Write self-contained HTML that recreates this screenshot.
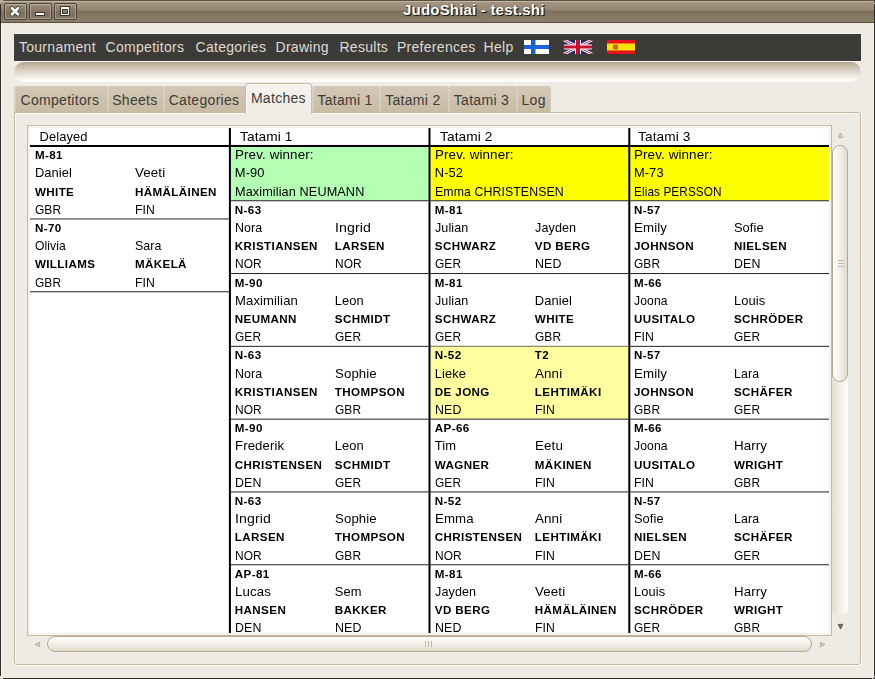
<!DOCTYPE html>
<html><head><meta charset="utf-8"><style>
html,body{margin:0;padding:0;}
body{width:875px;height:679px;position:relative;overflow:hidden;background:#3c3b37;font-family:"Liberation Sans",sans-serif;}
#win{position:absolute;left:0;top:0;width:875px;height:679px;background:#eeeae4;border-radius:5px 5px 4px 4px;overflow:hidden;}
div{position:absolute;box-sizing:border-box;}
.t{white-space:pre;line-height:normal;transform-origin:0 0;}
#title{left:0;top:0;width:875px;height:23px;
 background:linear-gradient(#57503f 0,#57503f 1px,#c4b8a5 1px,#c4b8a5 2px,#a39581 2px,#958772 10px,#7d705e 11px,#8d806a 22px,#57503f 22px);}
.wbtn{top:3px;width:23px;height:17px;border:1px solid #4a4235;border-radius:2px;
 background:linear-gradient(#9c8f7b,#7d705e 60%,#857866);box-shadow:inset 0 0 0 1px rgba(255,255,255,0.3);}
#toolbar{left:14px;top:62px;width:847px;height:20px;border-radius:10px;
 background:linear-gradient(#b3a48c 0%,#d9d0c3 40%,#f5f2ec 80%,#ffffff 100%);}
#nbframe{left:14px;top:112px;width:847px;height:553px;border:1px solid #c8b9a0;border-radius:0 3px 3px 3px;
 box-shadow:inset 1px 1px 0 #fbfaf7, 1px 1px 0 #fbf9f5;}
.tab{top:86px;height:27px;border:1px solid #d6ccbc;border-bottom:1px solid #c8b9a0;border-radius:3px 3px 0 0;
 background:linear-gradient(#d3c8b5,#c9bca5);box-shadow:inset 1px 0 0 rgba(255,255,255,0.25);}
#acttab{left:245px;top:83px;width:67px;height:31px;border:1px solid #c9bca6;border-bottom:none;border-radius:4px 4px 0 0;
 background:linear-gradient(#f6f3ee,#efebe5);box-shadow:inset 1px 1px 0 #fdfcfa;}
#swframe{left:27px;top:125px;width:805px;height:511px;border:1px solid #c8b9a0;background:#f6f3ee;}
#content{left:30px;top:128px;width:799px;height:505px;background:#fff;overflow:hidden;will-change:transform;}
#vslider{left:832px;top:145px;width:16px;height:237px;border:1px solid #b8a78c;border-radius:8px;
 background:linear-gradient(90deg,#ffffff,#f0ebe3 60%,#e3dace);}
#vtrough{left:832px;top:370px;width:16px;height:246px;border-radius:0 0 8px 8px;
 background:linear-gradient(90deg,#e6ded1,#f5f1ea 60%,#ffffff);}
#hslider{left:47px;top:636px;width:765px;height:16px;border:1px solid #b8a78c;border-radius:8px;
 background:linear-gradient(#ffffff,#f0ebe3 60%,#e3dace);}
.grip{width:6px;height:1px;background:#c5b8a2;}
.vgrip{width:1px;height:6px;background:#c5b8a2;}
</style></head>
<body><div style="left:0;top:0;width:8px;height:8px;background:#b9aa93"></div><div style="left:867px;top:671px;width:8px;height:8px;background:#3a2236"></div><div style="left:0;top:671px;width:8px;height:8px;background:#d8cfc4"></div><div id="win">
<div id="title"></div>
<div class="wbtn" style="left:4px"></div>
<div class="wbtn" style="left:29px"></div>
<div class="wbtn" style="left:54px"></div>
<svg style="position:absolute;left:0;top:0" width="90" height="24">
<g stroke="#3b342a" stroke-width="4.4" stroke-linecap="round" opacity="0.95">
<path d="M12 8.3 L18 14.2 M18 8.3 L12 14.2"/></g>
<g stroke="#fff" stroke-width="2.7" stroke-linecap="round">
<path d="M12 8.3 L18 14.2 M18 8.3 L12 14.2"/></g>
<rect x="35" y="12" width="10" height="4" rx="1" fill="#3b342a"/>
<rect x="36" y="13" width="8" height="2" fill="#fff"/>
<rect x="60" y="6" width="10" height="10" rx="0.8" fill="#3b342a"/>
<rect x="61" y="7" width="8" height="8" fill="#fff"/>
<rect x="62" y="9" width="6" height="5" fill="#3b342a"/>
<rect x="63" y="10" width="4" height="3" fill="#887b68"/>
</svg>
<div class="t" style="left:403.00px;top:1.00px;font-size:15px;font-weight:700;color:#fff;letter-spacing:0.2px;text-shadow:1px 1px 1px #1e1a12, 1px 1px 0 #3a3226, 0 0 1px #3a3226">JudoShiai - test.shi</div>
<div style="left:14px;top:33px;width:847px;height:1px;background:#f8f6f2"></div>
<div style="left:14px;top:34px;width:847px;height:27px;background:#3c3b37"></div>
<div style="left:14px;top:61px;width:847px;height:1px;background:#faf8f4"></div>
<div class="t" style="left:18.90px;top:39.00px;font-size:14px;font-weight:400;color:#dfdbd2;letter-spacing:0.3px;">Tournament</div>
<div class="t" style="left:105.50px;top:39.00px;font-size:14px;font-weight:400;color:#dfdbd2;letter-spacing:0.3px;">Competitors</div>
<div class="t" style="left:195.50px;top:39.00px;font-size:14px;font-weight:400;color:#dfdbd2;letter-spacing:0.3px;">Categories</div>
<div class="t" style="left:275.50px;top:39.00px;font-size:14px;font-weight:400;color:#dfdbd2;letter-spacing:0.3px;">Drawing</div>
<div class="t" style="left:339.40px;top:39.00px;font-size:14px;font-weight:400;color:#dfdbd2;letter-spacing:0.3px;">Results</div>
<div class="t" style="left:396.90px;top:39.00px;font-size:14px;font-weight:400;color:#dfdbd2;letter-spacing:0.3px;">Preferences</div>
<div class="t" style="left:483.50px;top:39.00px;font-size:14px;font-weight:400;color:#dfdbd2;letter-spacing:0.3px;">Help</div>
<svg style="position:absolute;left:524px;top:40px" width="112" height="14">
<rect x="0" y="0" width="25" height="14" fill="#fff"/>
<rect x="7" y="0" width="4.5" height="14" fill="#1a62d6"/>
<rect x="0" y="5" width="25" height="4" fill="#1a62d6"/>
<g transform="translate(40,0)">
<rect x="0" y="0" width="28" height="14" fill="#1c2a6a"/>
<path d="M0 0 L28 14 M28 0 L0 14" stroke="#fff" stroke-width="3"/>
<path d="M0 0 L28 14 M28 0 L0 14" stroke="#c8102e" stroke-width="1"/>
<rect x="11" y="0" width="6" height="14" fill="#fff"/>
<rect x="0" y="4.5" width="28" height="5" fill="#fff"/>
<rect x="12" y="0" width="4" height="14" fill="#c8102e"/>
<rect x="0" y="5.5" width="28" height="3" fill="#c8102e"/>
</g>
<g transform="translate(83,0)">
<rect x="0" y="0" width="28" height="14" fill="#e8101a"/>
<rect x="0" y="3.5" width="28" height="7" fill="#fbe000"/>
<rect x="6" y="4.5" width="5" height="5" fill="#c46a30" rx="1"/>
</g>
</svg>
<div id="toolbar"></div>
<div id="nbframe"></div>
<div class="tab" style="left:14px;width:94px"></div>
<div class="tab" style="left:107px;width:57px"></div>
<div class="tab" style="left:163px;width:83px"></div>
<div class="tab" style="left:312px;width:68px"></div>
<div class="tab" style="left:379px;width:70px"></div>
<div class="tab" style="left:447.5px;width:69.5px"></div>
<div class="tab" style="left:516px;width:35px"></div>
<div class="t" style="left:20.50px;top:92.00px;font-size:14px;font-weight:400;color:#3c3b37;letter-spacing:0.3px;">Competitors</div>
<div class="t" style="left:112.20px;top:92.00px;font-size:14px;font-weight:400;color:#3c3b37;letter-spacing:0.3px;">Sheets</div>
<div class="t" style="left:168.70px;top:92.00px;font-size:14px;font-weight:400;color:#3c3b37;letter-spacing:0.3px;">Categories</div>
<div class="t" style="left:317.40px;top:92.00px;font-size:14px;font-weight:400;color:#3c3b37;letter-spacing:0.3px;">Tatami 1</div>
<div class="t" style="left:385.20px;top:92.00px;font-size:14px;font-weight:400;color:#3c3b37;letter-spacing:0.3px;">Tatami 2</div>
<div class="t" style="left:453.80px;top:92.00px;font-size:14px;font-weight:400;color:#3c3b37;letter-spacing:0.3px;">Tatami 3</div>
<div class="t" style="left:521.50px;top:92.00px;font-size:14px;font-weight:400;color:#3c3b37;letter-spacing:0.3px;">Log</div>
<div id="acttab"></div>
<div class="t" style="left:250.90px;top:90.00px;font-size:14px;font-weight:400;color:#3c3b37;letter-spacing:0.3px;">Matches</div>
<div id="swframe"></div>
<div id="content">
<svg style="position:absolute;left:0;top:0" width="800" height="510" shape-rendering="geometricPrecision"><rect x="0" y="90.45" width="198.9" height="1" fill="#222"/><rect x="0" y="163.25" width="198.9" height="1" fill="#222"/><rect x="200.9" y="19.0" width="197.6" height="53.60" fill="#b3ffb3"/><rect x="200.9" y="72.25" width="197.6" height="1" fill="#222"/><rect x="200.9" y="145.05" width="197.6" height="1" fill="#222"/><rect x="200.9" y="217.85" width="197.6" height="1" fill="#222"/><rect x="200.9" y="290.65" width="197.6" height="1" fill="#222"/><rect x="200.9" y="363.45" width="197.6" height="1" fill="#222"/><rect x="200.9" y="436.25" width="197.6" height="1" fill="#222"/><rect x="200.9" y="509.05" width="197.6" height="1" fill="#222"/><rect x="400.5" y="19.0" width="197.79999999999995" height="53.60" fill="#ffff00"/><rect x="400.5" y="72.25" width="197.79999999999995" height="1" fill="#222"/><rect x="400.5" y="145.05" width="197.79999999999995" height="1" fill="#222"/><rect x="400.5" y="217.85" width="197.79999999999995" height="1" fill="#222"/><rect x="400.5" y="218.60" width="197.79999999999995" height="72.00" fill="#ffffa0"/><rect x="400.5" y="290.65" width="197.79999999999995" height="1" fill="#222"/><rect x="400.5" y="363.45" width="197.79999999999995" height="1" fill="#222"/><rect x="400.5" y="436.25" width="197.79999999999995" height="1" fill="#222"/><rect x="400.5" y="509.05" width="197.79999999999995" height="1" fill="#222"/><rect x="600.3" y="19.0" width="198.70000000000005" height="53.60" fill="#ffff00"/><rect x="600.3" y="72.25" width="198.70000000000005" height="1" fill="#222"/><rect x="600.3" y="145.05" width="198.70000000000005" height="1" fill="#222"/><rect x="600.3" y="217.85" width="198.70000000000005" height="1" fill="#222"/><rect x="600.3" y="290.65" width="198.70000000000005" height="1" fill="#222"/><rect x="600.3" y="363.45" width="198.70000000000005" height="1" fill="#222"/><rect x="600.3" y="436.25" width="198.70000000000005" height="1" fill="#222"/><rect x="600.3" y="509.05" width="198.70000000000005" height="1" fill="#222"/><rect x="0" y="17" width="800" height="2" fill="#000"/><rect x="198.90" y="0" width="2" height="520" fill="#000"/><rect x="398.50" y="0" width="2" height="520" fill="#000"/><rect x="598.30" y="0" width="2" height="520" fill="#000"/></svg>
<div class="t" style="left:9.50px;top:1.00px;font-size:12.9px;font-weight:400;letter-spacing:0.1px;">Delayed</div>
<div class="t" style="left:4.90px;top:20.00px;font-size:11.6px;font-weight:700;letter-spacing:0.4px;">M-81</div>
<div class="t" style="left:4.90px;top:37.00px;font-size:12.9px;font-weight:400;letter-spacing:0.1px;">Daniel</div>
<div class="t" style="left:104.90px;top:37.00px;font-size:12.9px;font-weight:400;letter-spacing:0.1px;transform:scaleX(1.0357);">Veeti</div>
<div class="t" style="left:4.90px;top:57.00px;font-size:11.6px;font-weight:700;letter-spacing:0.4px;">WHITE</div>
<div class="t" style="left:104.90px;top:57.00px;font-size:11.6px;font-weight:700;letter-spacing:0.4px;">HÄMÄLÄINEN</div>
<div class="t" style="left:4.90px;top:74.00px;font-size:12.9px;font-weight:400;letter-spacing:0.1px;transform:scaleX(0.9231);">GBR</div>
<div class="t" style="left:104.90px;top:74.00px;font-size:12.9px;font-weight:400;letter-spacing:0.1px;transform:scaleX(0.9474);">FIN</div>
<div class="t" style="left:4.90px;top:93.00px;font-size:11.6px;font-weight:700;letter-spacing:0.4px;">N-70</div>
<div class="t" style="left:4.90px;top:110.00px;font-size:12.9px;font-weight:400;letter-spacing:0.1px;transform:scaleX(0.9375);">Olivia</div>
<div class="t" style="left:104.90px;top:110.00px;font-size:12.9px;font-weight:400;letter-spacing:0.1px;transform:scaleX(0.9615);">Sara</div>
<div class="t" style="left:4.90px;top:129.00px;font-size:11.6px;font-weight:700;letter-spacing:0.4px;">WILLIAMS</div>
<div class="t" style="left:104.90px;top:129.00px;font-size:11.6px;font-weight:700;letter-spacing:0.4px;">MÄKELÄ</div>
<div class="t" style="left:4.90px;top:147.00px;font-size:12.9px;font-weight:400;letter-spacing:0.1px;transform:scaleX(0.9231);">GBR</div>
<div class="t" style="left:104.90px;top:147.00px;font-size:12.9px;font-weight:400;letter-spacing:0.1px;transform:scaleX(0.9474);">FIN</div>
<div class="t" style="left:209.80px;top:1.00px;font-size:12.9px;font-weight:400;letter-spacing:0.1px;transform:scaleX(1.0612);">Tatami 1</div>
<div class="t" style="left:204.80px;top:19.00px;font-size:12.9px;font-weight:400;letter-spacing:0.1px;transform:scaleX(1.0405);">Prev. winner:</div>
<div class="t" style="left:204.80px;top:37.00px;font-size:12.9px;font-weight:400;letter-spacing:0.1px;">M-90</div>
<div class="t" style="left:204.80px;top:56.00px;font-size:12.9px;font-weight:400;letter-spacing:0.1px;transform:scaleX(0.9845);">Maximilian NEUMANN</div>
<div class="t" style="left:204.80px;top:75.00px;font-size:11.6px;font-weight:700;letter-spacing:0.4px;">N-63</div>
<div class="t" style="left:204.80px;top:92.00px;font-size:12.9px;font-weight:400;letter-spacing:0.1px;transform:scaleX(0.963);">Nora</div>
<div class="t" style="left:304.80px;top:92.00px;font-size:12.9px;font-weight:400;letter-spacing:0.1px;transform:scaleX(1.0968);">Ingrid</div>
<div class="t" style="left:204.80px;top:111.00px;font-size:11.6px;font-weight:700;letter-spacing:0.4px;">KRISTIANSEN</div>
<div class="t" style="left:304.80px;top:111.00px;font-size:11.6px;font-weight:700;letter-spacing:0.4px;">LARSEN</div>
<div class="t" style="left:204.80px;top:128.00px;font-size:12.9px;font-weight:400;letter-spacing:0.1px;transform:scaleX(0.9259);">NOR</div>
<div class="t" style="left:304.80px;top:128.00px;font-size:12.9px;font-weight:400;letter-spacing:0.1px;transform:scaleX(0.9259);">NOR</div>
<div class="t" style="left:204.80px;top:148.00px;font-size:11.6px;font-weight:700;letter-spacing:0.4px;">M-90</div>
<div class="t" style="left:204.80px;top:165.00px;font-size:12.9px;font-weight:400;letter-spacing:0.1px;transform:scaleX(1.0167);">Maximilian</div>
<div class="t" style="left:304.80px;top:165.00px;font-size:12.9px;font-weight:400;letter-spacing:0.1px;">Leon</div>
<div class="t" style="left:204.80px;top:184.00px;font-size:11.6px;font-weight:700;letter-spacing:0.4px;">NEUMANN</div>
<div class="t" style="left:304.80px;top:184.00px;font-size:11.6px;font-weight:700;letter-spacing:0.4px;">SCHMIDT</div>
<div class="t" style="left:204.80px;top:201.00px;font-size:12.9px;font-weight:400;letter-spacing:0.1px;transform:scaleX(0.9231);">GER</div>
<div class="t" style="left:304.80px;top:201.00px;font-size:12.9px;font-weight:400;letter-spacing:0.1px;transform:scaleX(0.9231);">GER</div>
<div class="t" style="left:204.80px;top:220.00px;font-size:11.6px;font-weight:700;letter-spacing:0.4px;">N-63</div>
<div class="t" style="left:204.80px;top:238.00px;font-size:12.9px;font-weight:400;letter-spacing:0.1px;transform:scaleX(0.963);">Nora</div>
<div class="t" style="left:304.80px;top:238.00px;font-size:12.9px;font-weight:400;letter-spacing:0.1px;transform:scaleX(1.0256);">Sophie</div>
<div class="t" style="left:204.80px;top:257.00px;font-size:11.6px;font-weight:700;letter-spacing:0.4px;">KRISTIANSEN</div>
<div class="t" style="left:304.80px;top:257.00px;font-size:11.6px;font-weight:700;letter-spacing:0.4px;">THOMPSON</div>
<div class="t" style="left:204.80px;top:274.00px;font-size:12.9px;font-weight:400;letter-spacing:0.1px;transform:scaleX(0.9259);">NOR</div>
<div class="t" style="left:304.80px;top:274.00px;font-size:12.9px;font-weight:400;letter-spacing:0.1px;transform:scaleX(0.9231);">GBR</div>
<div class="t" style="left:204.80px;top:293.00px;font-size:11.6px;font-weight:700;letter-spacing:0.4px;">M-90</div>
<div class="t" style="left:204.80px;top:310.00px;font-size:12.9px;font-weight:400;letter-spacing:0.1px;transform:scaleX(1.0213);">Frederik</div>
<div class="t" style="left:304.80px;top:310.00px;font-size:12.9px;font-weight:400;letter-spacing:0.1px;">Leon</div>
<div class="t" style="left:204.80px;top:330.00px;font-size:11.6px;font-weight:700;letter-spacing:0.4px;">CHRISTENSEN</div>
<div class="t" style="left:304.80px;top:330.00px;font-size:11.6px;font-weight:700;letter-spacing:0.4px;">SCHMIDT</div>
<div class="t" style="left:204.80px;top:347.00px;font-size:12.9px;font-weight:400;letter-spacing:0.1px;transform:scaleX(0.96);">DEN</div>
<div class="t" style="left:304.80px;top:347.00px;font-size:12.9px;font-weight:400;letter-spacing:0.1px;transform:scaleX(0.9231);">GER</div>
<div class="t" style="left:204.80px;top:366.00px;font-size:11.6px;font-weight:700;letter-spacing:0.4px;">N-63</div>
<div class="t" style="left:204.80px;top:383.00px;font-size:12.9px;font-weight:400;letter-spacing:0.1px;transform:scaleX(1.0968);">Ingrid</div>
<div class="t" style="left:304.80px;top:383.00px;font-size:12.9px;font-weight:400;letter-spacing:0.1px;transform:scaleX(1.0256);">Sophie</div>
<div class="t" style="left:204.80px;top:402.00px;font-size:11.6px;font-weight:700;letter-spacing:0.4px;">LARSEN</div>
<div class="t" style="left:304.80px;top:402.00px;font-size:11.6px;font-weight:700;letter-spacing:0.4px;">THOMPSON</div>
<div class="t" style="left:204.80px;top:420.00px;font-size:12.9px;font-weight:400;letter-spacing:0.1px;transform:scaleX(0.9259);">NOR</div>
<div class="t" style="left:304.80px;top:420.00px;font-size:12.9px;font-weight:400;letter-spacing:0.1px;transform:scaleX(0.9231);">GBR</div>
<div class="t" style="left:204.80px;top:439.00px;font-size:11.6px;font-weight:700;letter-spacing:0.4px;">AP-81</div>
<div class="t" style="left:204.80px;top:456.00px;font-size:12.9px;font-weight:400;letter-spacing:0.1px;transform:scaleX(1.0303);">Lucas</div>
<div class="t" style="left:304.80px;top:456.00px;font-size:12.9px;font-weight:400;letter-spacing:0.1px;">Sem</div>
<div class="t" style="left:204.80px;top:475.00px;font-size:11.6px;font-weight:700;letter-spacing:0.4px;">HANSEN</div>
<div class="t" style="left:304.80px;top:475.00px;font-size:11.6px;font-weight:700;letter-spacing:0.4px;">BAKKER</div>
<div class="t" style="left:204.80px;top:492.00px;font-size:12.9px;font-weight:400;letter-spacing:0.1px;transform:scaleX(0.96);">DEN</div>
<div class="t" style="left:304.80px;top:492.00px;font-size:12.9px;font-weight:400;letter-spacing:0.1px;transform:scaleX(0.9615);">NED</div>
<div class="t" style="left:409.70px;top:1.00px;font-size:12.9px;font-weight:400;letter-spacing:0.1px;transform:scaleX(1.0612);">Tatami 2</div>
<div class="t" style="left:404.80px;top:19.00px;font-size:12.9px;font-weight:400;letter-spacing:0.1px;transform:scaleX(1.0405);">Prev. winner:</div>
<div class="t" style="left:404.80px;top:37.00px;font-size:12.9px;font-weight:400;letter-spacing:0.1px;">N-52</div>
<div class="t" style="left:404.80px;top:56.00px;font-size:12.9px;font-weight:400;letter-spacing:0.1px;transform:scaleX(0.9549);">Emma CHRISTENSEN</div>
<div class="t" style="left:404.80px;top:75.00px;font-size:11.6px;font-weight:700;letter-spacing:0.4px;">M-81</div>
<div class="t" style="left:404.80px;top:92.00px;font-size:12.9px;font-weight:400;letter-spacing:0.1px;transform:scaleX(0.9706);">Julian</div>
<div class="t" style="left:504.80px;top:92.00px;font-size:12.9px;font-weight:400;letter-spacing:0.1px;transform:scaleX(0.9762);">Jayden</div>
<div class="t" style="left:404.80px;top:111.00px;font-size:11.6px;font-weight:700;letter-spacing:0.4px;">SCHWARZ</div>
<div class="t" style="left:504.80px;top:111.00px;font-size:11.6px;font-weight:700;letter-spacing:0.4px;">VD BERG</div>
<div class="t" style="left:404.80px;top:128.00px;font-size:12.9px;font-weight:400;letter-spacing:0.1px;transform:scaleX(0.9231);">GER</div>
<div class="t" style="left:504.80px;top:128.00px;font-size:12.9px;font-weight:400;letter-spacing:0.1px;transform:scaleX(0.9615);">NED</div>
<div class="t" style="left:404.80px;top:148.00px;font-size:11.6px;font-weight:700;letter-spacing:0.4px;">M-81</div>
<div class="t" style="left:404.80px;top:165.00px;font-size:12.9px;font-weight:400;letter-spacing:0.1px;transform:scaleX(0.9706);">Julian</div>
<div class="t" style="left:504.80px;top:165.00px;font-size:12.9px;font-weight:400;letter-spacing:0.1px;">Daniel</div>
<div class="t" style="left:404.80px;top:184.00px;font-size:11.6px;font-weight:700;letter-spacing:0.4px;">SCHWARZ</div>
<div class="t" style="left:504.80px;top:184.00px;font-size:11.6px;font-weight:700;letter-spacing:0.4px;">WHITE</div>
<div class="t" style="left:404.80px;top:201.00px;font-size:12.9px;font-weight:400;letter-spacing:0.1px;transform:scaleX(0.9231);">GER</div>
<div class="t" style="left:504.80px;top:201.00px;font-size:12.9px;font-weight:400;letter-spacing:0.1px;transform:scaleX(0.9231);">GBR</div>
<div class="t" style="left:404.80px;top:220.00px;font-size:11.6px;font-weight:700;letter-spacing:0.4px;">N-52</div>
<div class="t" style="left:504.80px;top:220.00px;font-size:11.6px;font-weight:700;letter-spacing:0.4px;">T2</div>
<div class="t" style="left:404.80px;top:238.00px;font-size:12.9px;font-weight:400;letter-spacing:0.1px;">Lieke</div>
<div class="t" style="left:504.80px;top:238.00px;font-size:12.9px;font-weight:400;letter-spacing:0.1px;transform:scaleX(1.04);">Anni</div>
<div class="t" style="left:404.80px;top:257.00px;font-size:11.6px;font-weight:700;letter-spacing:0.4px;">DE JONG</div>
<div class="t" style="left:504.80px;top:257.00px;font-size:11.6px;font-weight:700;letter-spacing:0.4px;">LEHTIMÄKI</div>
<div class="t" style="left:404.80px;top:274.00px;font-size:12.9px;font-weight:400;letter-spacing:0.1px;transform:scaleX(0.9615);">NED</div>
<div class="t" style="left:504.80px;top:274.00px;font-size:12.9px;font-weight:400;letter-spacing:0.1px;transform:scaleX(0.9474);">FIN</div>
<div class="t" style="left:404.80px;top:293.00px;font-size:11.6px;font-weight:700;letter-spacing:0.4px;">AP-66</div>
<div class="t" style="left:404.80px;top:310.00px;font-size:12.9px;font-weight:400;letter-spacing:0.1px;">Tim</div>
<div class="t" style="left:504.80px;top:310.00px;font-size:12.9px;font-weight:400;letter-spacing:0.1px;transform:scaleX(1.04);">Eetu</div>
<div class="t" style="left:404.80px;top:330.00px;font-size:11.6px;font-weight:700;letter-spacing:0.4px;">WAGNER</div>
<div class="t" style="left:504.80px;top:330.00px;font-size:11.6px;font-weight:700;letter-spacing:0.4px;">MÄKINEN</div>
<div class="t" style="left:404.80px;top:347.00px;font-size:12.9px;font-weight:400;letter-spacing:0.1px;transform:scaleX(0.9231);">GER</div>
<div class="t" style="left:504.80px;top:347.00px;font-size:12.9px;font-weight:400;letter-spacing:0.1px;transform:scaleX(0.9474);">FIN</div>
<div class="t" style="left:404.80px;top:366.00px;font-size:11.6px;font-weight:700;letter-spacing:0.4px;">N-52</div>
<div class="t" style="left:404.80px;top:383.00px;font-size:12.9px;font-weight:400;letter-spacing:0.1px;transform:scaleX(1.0278);">Emma</div>
<div class="t" style="left:504.80px;top:383.00px;font-size:12.9px;font-weight:400;letter-spacing:0.1px;transform:scaleX(1.04);">Anni</div>
<div class="t" style="left:404.80px;top:402.00px;font-size:11.6px;font-weight:700;letter-spacing:0.4px;">CHRISTENSEN</div>
<div class="t" style="left:504.80px;top:402.00px;font-size:11.6px;font-weight:700;letter-spacing:0.4px;">LEHTIMÄKI</div>
<div class="t" style="left:404.80px;top:420.00px;font-size:12.9px;font-weight:400;letter-spacing:0.1px;transform:scaleX(0.9259);">NOR</div>
<div class="t" style="left:504.80px;top:420.00px;font-size:12.9px;font-weight:400;letter-spacing:0.1px;transform:scaleX(0.9474);">FIN</div>
<div class="t" style="left:404.80px;top:439.00px;font-size:11.6px;font-weight:700;letter-spacing:0.4px;">M-81</div>
<div class="t" style="left:404.80px;top:456.00px;font-size:12.9px;font-weight:400;letter-spacing:0.1px;transform:scaleX(0.9762);">Jayden</div>
<div class="t" style="left:504.80px;top:456.00px;font-size:12.9px;font-weight:400;letter-spacing:0.1px;transform:scaleX(1.0357);">Veeti</div>
<div class="t" style="left:404.80px;top:475.00px;font-size:11.6px;font-weight:700;letter-spacing:0.4px;">VD BERG</div>
<div class="t" style="left:504.80px;top:475.00px;font-size:11.6px;font-weight:700;letter-spacing:0.4px;">HÄMÄLÄINEN</div>
<div class="t" style="left:404.80px;top:492.00px;font-size:12.9px;font-weight:400;letter-spacing:0.1px;transform:scaleX(0.9615);">NED</div>
<div class="t" style="left:504.80px;top:492.00px;font-size:12.9px;font-weight:400;letter-spacing:0.1px;transform:scaleX(0.9474);">FIN</div>
<div class="t" style="left:608.40px;top:1.00px;font-size:12.9px;font-weight:400;letter-spacing:0.1px;transform:scaleX(1.0612);">Tatami 3</div>
<div class="t" style="left:603.90px;top:19.00px;font-size:12.9px;font-weight:400;letter-spacing:0.1px;transform:scaleX(1.0405);">Prev. winner:</div>
<div class="t" style="left:603.90px;top:37.00px;font-size:12.9px;font-weight:400;letter-spacing:0.1px;">M-73</div>
<div class="t" style="left:603.90px;top:56.00px;font-size:12.9px;font-weight:400;letter-spacing:0.1px;transform:scaleX(0.9149);">Elias PERSSON</div>
<div class="t" style="left:603.90px;top:75.00px;font-size:11.6px;font-weight:700;letter-spacing:0.4px;">N-57</div>
<div class="t" style="left:603.90px;top:92.00px;font-size:12.9px;font-weight:400;letter-spacing:0.1px;transform:scaleX(1.0323);">Emily</div>
<div class="t" style="left:703.90px;top:92.00px;font-size:12.9px;font-weight:400;letter-spacing:0.1px;">Sofie</div>
<div class="t" style="left:603.90px;top:111.00px;font-size:11.6px;font-weight:700;letter-spacing:0.4px;">JOHNSON</div>
<div class="t" style="left:703.90px;top:111.00px;font-size:11.6px;font-weight:700;letter-spacing:0.4px;">NIELSEN</div>
<div class="t" style="left:603.90px;top:128.00px;font-size:12.9px;font-weight:400;letter-spacing:0.1px;transform:scaleX(0.9231);">GBR</div>
<div class="t" style="left:703.90px;top:128.00px;font-size:12.9px;font-weight:400;letter-spacing:0.1px;transform:scaleX(0.96);">DEN</div>
<div class="t" style="left:603.90px;top:148.00px;font-size:11.6px;font-weight:700;letter-spacing:0.4px;">M-66</div>
<div class="t" style="left:603.90px;top:165.00px;font-size:12.9px;font-weight:400;letter-spacing:0.1px;transform:scaleX(0.9429);">Joona</div>
<div class="t" style="left:703.90px;top:165.00px;font-size:12.9px;font-weight:400;letter-spacing:0.1px;">Louis</div>
<div class="t" style="left:603.90px;top:184.00px;font-size:11.6px;font-weight:700;letter-spacing:0.4px;">UUSITALO</div>
<div class="t" style="left:703.90px;top:184.00px;font-size:11.6px;font-weight:700;letter-spacing:0.4px;">SCHRÖDER</div>
<div class="t" style="left:603.90px;top:201.00px;font-size:12.9px;font-weight:400;letter-spacing:0.1px;transform:scaleX(0.9474);">FIN</div>
<div class="t" style="left:703.90px;top:201.00px;font-size:12.9px;font-weight:400;letter-spacing:0.1px;transform:scaleX(0.9231);">GER</div>
<div class="t" style="left:603.90px;top:220.00px;font-size:11.6px;font-weight:700;letter-spacing:0.4px;">N-57</div>
<div class="t" style="left:603.90px;top:238.00px;font-size:12.9px;font-weight:400;letter-spacing:0.1px;transform:scaleX(1.0323);">Emily</div>
<div class="t" style="left:703.90px;top:238.00px;font-size:12.9px;font-weight:400;letter-spacing:0.1px;transform:scaleX(0.96);">Lara</div>
<div class="t" style="left:603.90px;top:257.00px;font-size:11.6px;font-weight:700;letter-spacing:0.4px;">JOHNSON</div>
<div class="t" style="left:703.90px;top:257.00px;font-size:11.6px;font-weight:700;letter-spacing:0.4px;">SCHÄFER</div>
<div class="t" style="left:603.90px;top:274.00px;font-size:12.9px;font-weight:400;letter-spacing:0.1px;transform:scaleX(0.9231);">GBR</div>
<div class="t" style="left:703.90px;top:274.00px;font-size:12.9px;font-weight:400;letter-spacing:0.1px;transform:scaleX(0.9231);">GER</div>
<div class="t" style="left:603.90px;top:293.00px;font-size:11.6px;font-weight:700;letter-spacing:0.4px;">M-66</div>
<div class="t" style="left:603.90px;top:310.00px;font-size:12.9px;font-weight:400;letter-spacing:0.1px;transform:scaleX(0.9429);">Joona</div>
<div class="t" style="left:703.90px;top:310.00px;font-size:12.9px;font-weight:400;letter-spacing:0.1px;transform:scaleX(1.0323);">Harry</div>
<div class="t" style="left:603.90px;top:330.00px;font-size:11.6px;font-weight:700;letter-spacing:0.4px;">UUSITALO</div>
<div class="t" style="left:703.90px;top:330.00px;font-size:11.6px;font-weight:700;letter-spacing:0.4px;">WRIGHT</div>
<div class="t" style="left:603.90px;top:347.00px;font-size:12.9px;font-weight:400;letter-spacing:0.1px;transform:scaleX(0.9474);">FIN</div>
<div class="t" style="left:703.90px;top:347.00px;font-size:12.9px;font-weight:400;letter-spacing:0.1px;transform:scaleX(0.9231);">GBR</div>
<div class="t" style="left:603.90px;top:366.00px;font-size:11.6px;font-weight:700;letter-spacing:0.4px;">N-57</div>
<div class="t" style="left:603.90px;top:383.00px;font-size:12.9px;font-weight:400;letter-spacing:0.1px;">Sofie</div>
<div class="t" style="left:703.90px;top:383.00px;font-size:12.9px;font-weight:400;letter-spacing:0.1px;transform:scaleX(0.96);">Lara</div>
<div class="t" style="left:603.90px;top:402.00px;font-size:11.6px;font-weight:700;letter-spacing:0.4px;">NIELSEN</div>
<div class="t" style="left:703.90px;top:402.00px;font-size:11.6px;font-weight:700;letter-spacing:0.4px;">SCHÄFER</div>
<div class="t" style="left:603.90px;top:420.00px;font-size:12.9px;font-weight:400;letter-spacing:0.1px;transform:scaleX(0.96);">DEN</div>
<div class="t" style="left:703.90px;top:420.00px;font-size:12.9px;font-weight:400;letter-spacing:0.1px;transform:scaleX(0.9231);">GER</div>
<div class="t" style="left:603.90px;top:439.00px;font-size:11.6px;font-weight:700;letter-spacing:0.4px;">M-66</div>
<div class="t" style="left:603.90px;top:456.00px;font-size:12.9px;font-weight:400;letter-spacing:0.1px;">Louis</div>
<div class="t" style="left:703.90px;top:456.00px;font-size:12.9px;font-weight:400;letter-spacing:0.1px;transform:scaleX(1.0323);">Harry</div>
<div class="t" style="left:603.90px;top:475.00px;font-size:11.6px;font-weight:700;letter-spacing:0.4px;">SCHRÖDER</div>
<div class="t" style="left:703.90px;top:475.00px;font-size:11.6px;font-weight:700;letter-spacing:0.4px;">WRIGHT</div>
<div class="t" style="left:603.90px;top:492.00px;font-size:12.9px;font-weight:400;letter-spacing:0.1px;transform:scaleX(0.9231);">GER</div>
<div class="t" style="left:703.90px;top:492.00px;font-size:12.9px;font-weight:400;letter-spacing:0.1px;transform:scaleX(0.9231);">GBR</div>
</div>
<div id="vtrough"></div>
<div id="vslider"><div class="grip" style="left:5px;top:114px"></div><div class="grip" style="left:5px;top:117px"></div><div class="grip" style="left:5px;top:120px"></div></div>
<div id="hslider"><div class="vgrip" style="left:377px;top:4px"></div><div class="vgrip" style="left:380px;top:4px"></div><div class="vgrip" style="left:383px;top:4px"></div></div>
<svg style="position:absolute;left:0;top:0" width="875" height="679">
<path d="M838.3 137.6 L840.5 133 L842.7 137.6 Z" fill="#d9d1c4" stroke="#b8ac97" stroke-width="1" stroke-linejoin="round"/>
<path d="M838.3 624.4 L842.7 624.4 L840.5 629 Z" fill="#7a766f" stroke="#55524c" stroke-width="1" stroke-linejoin="round"/>
<path d="M39.6 642.3 L35 644.5 L39.6 646.7 Z" fill="#d9d1c4" stroke="#b8ac97" stroke-width="1" stroke-linejoin="round"/>
<path d="M820.4 642.3 L825 644.5 L820.4 646.7 Z" fill="#d9d1c4" stroke="#b8ac97" stroke-width="1" stroke-linejoin="round"/>
</svg>
<div style="left:0;top:4px;width:1px;height:672px;background:#2e2a24"></div>
<div style="left:1px;top:23px;width:1px;height:653px;background:#fbfaf7"></div>
<div style="left:874px;top:4px;width:1px;height:672px;background:#2e2a24"></div>
<div style="left:873px;top:23px;width:1px;height:653px;background:#f7f5f1"></div>
<div style="left:3px;top:678px;width:869px;height:1px;background:#2e2a24"></div>
</div></body></html>
